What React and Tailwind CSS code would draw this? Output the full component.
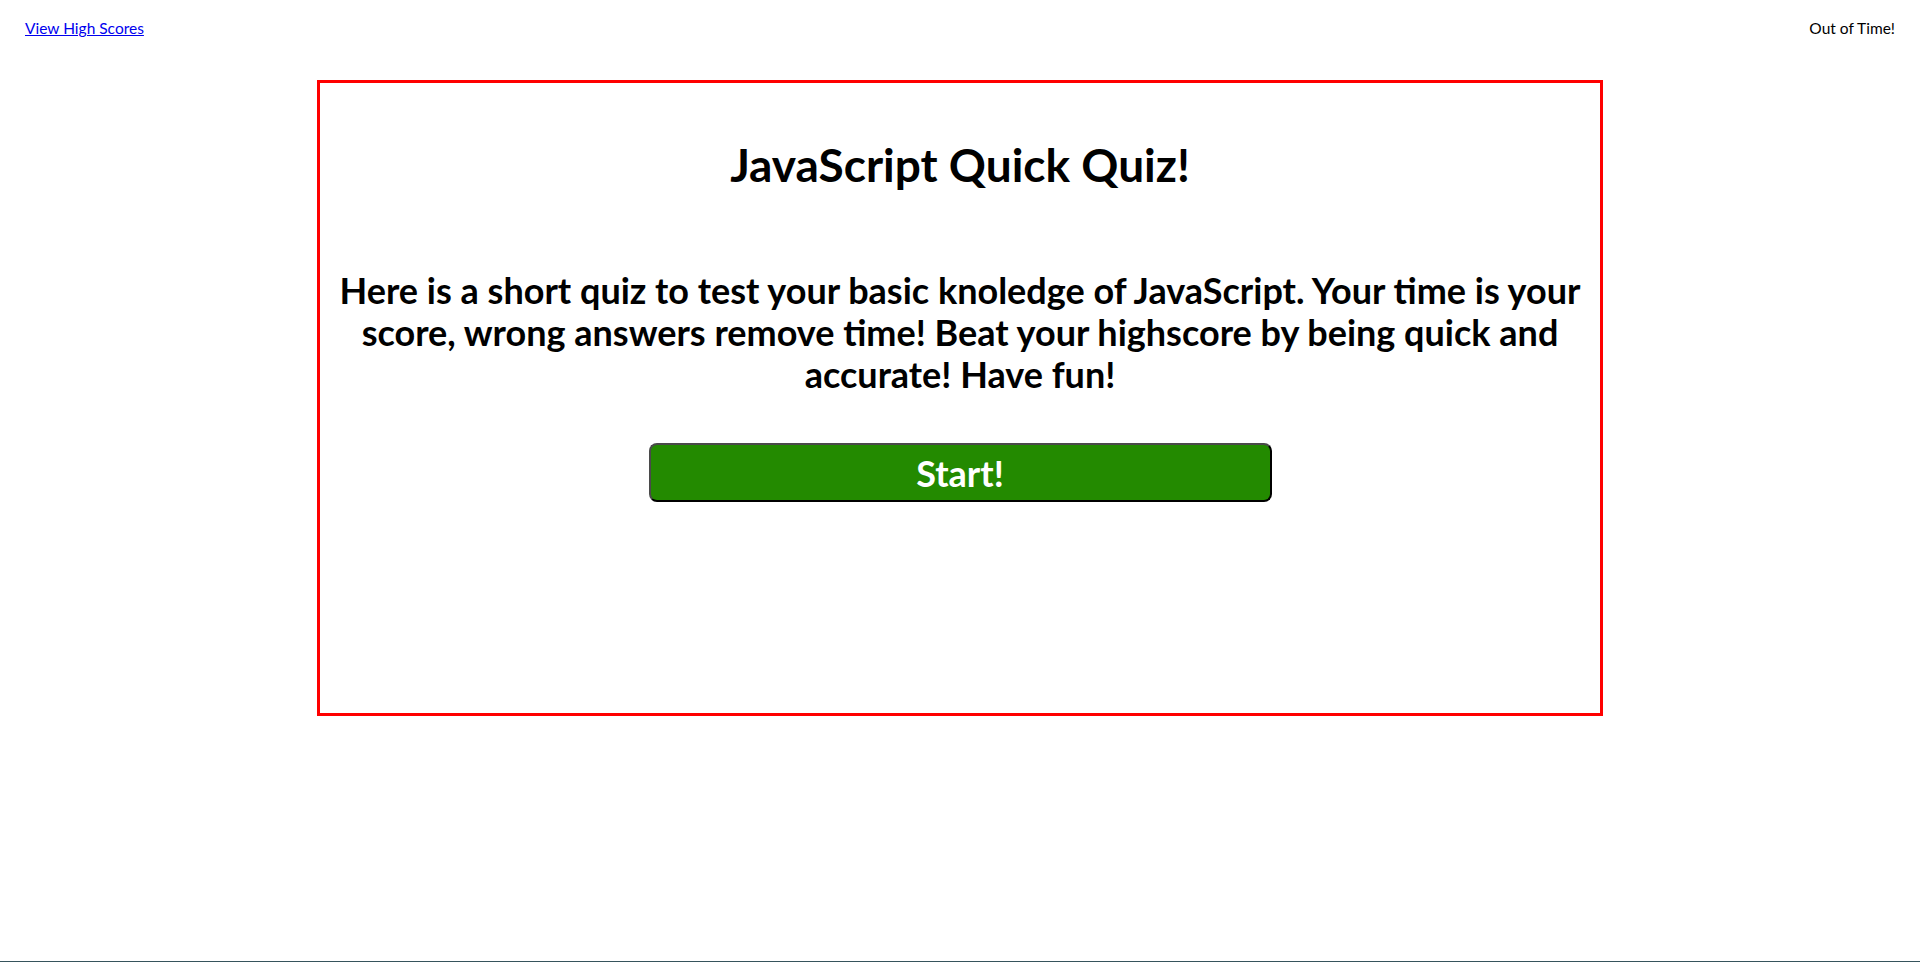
import React from "react";

const font = {
  fontFamily: 'Lato, "Liberation Sans", sans-serif',
};

const App = () => {
  return (
    <div className="min-h-screen flex flex-col bg-white text-black" style={font}>
      {/* top bar */}
      <header className="flex justify-between items-start px-[25px] pt-[18px] h-[80px] text-[15.5px] leading-[20px]">
        <a href="#" className="text-[#0000ee] underline">
          View High Scores
        </a>
        <span>Out of Time!</span>
      </header>

      {/* quiz card */}
      <main className="flex justify-center">
        <div className="w-[1286px] h-[636px] border-[3px] border-[#ff0000] flex flex-col items-center px-[17px]">
          <h1 className="mt-[54px] text-[46px] leading-[56px] font-bold text-center">
            JavaScript Quick Quiz!
          </h1>
          <p className="mt-[76px] text-[36px] leading-[42px] font-bold text-center">
            Here is a short quiz to test your basic knoledge of JavaScript. Your time is your score, wrong answers remove
            time! Beat your highscore by being quick and accurate! Have fun!
          </p>
          <button className="mt-[48px] w-[623px] h-[59px] rounded-[8px] bg-[#238a00] border-2 border-[#4a4a4a] border-r-black border-b-black text-white text-[36px] font-bold leading-none">
            Start!
          </button>
        </div>
      </main>

      <footer className="mt-auto border-b border-[#36545c]"></footer>
    </div>
  );
};

export default App;
